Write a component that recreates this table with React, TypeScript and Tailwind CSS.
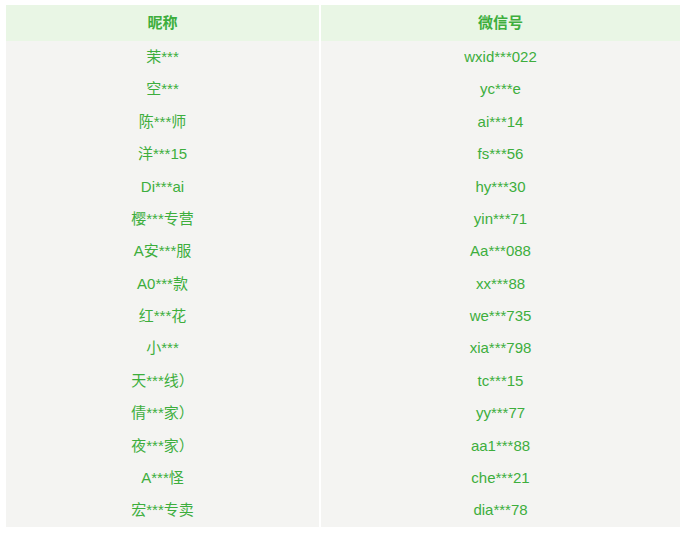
const rows: [string, string][] = [
  ["茉***", "wxid***022"],
  ["空***", "yc***e"],
  ["陈***师", "ai***14"],
  ["洋***15", "fs***56"],
  ["Di***ai", "hy***30"],
  ["樱***专营", "yin***71"],
  ["A安***服", "Aa***088"],
  ["A0***款", "xx***88"],
  ["红***花", "we***735"],
  ["小***", "xia***798"],
  ["天***线）", "tc***15"],
  ["倩***家）", "yy***77"],
  ["夜***家）", "aa1***88"],
  ["A***怪", "che***21"],
  ["宏***专卖", "dia***78"],
];

export default function App() {
  return (
    <div
      className="h-[533px] w-[688px] overflow-hidden bg-white pl-[6px] pt-[5px] text-[15px] text-[#3dae3d]"
      style={{ fontFamily: '"Liberation Sans", "Noto Sans CJK SC", sans-serif' }}
    >
      <div className="grid w-[674px] grid-cols-[313px_359px] gap-x-[2px]">
        {/* header */}
        <div className="flex h-[36px] items-center justify-center bg-[#e9f6e5] font-bold">昵称</div>
        <div className="flex h-[36px] items-center justify-center bg-[#e9f6e5] font-bold">微信号</div>
        {rows.map(([nick, wx]) => (
          <>
            <div key={nick + "n"} className="flex h-[32.4px] items-center justify-center bg-[#f4f4f2]">
              {nick}
            </div>
            <div key={nick + "w"} className="flex h-[32.4px] items-center justify-center bg-[#f4f4f2]">
              {wx}
            </div>
          </>
        ))}
      </div>
    </div>
  );
}
